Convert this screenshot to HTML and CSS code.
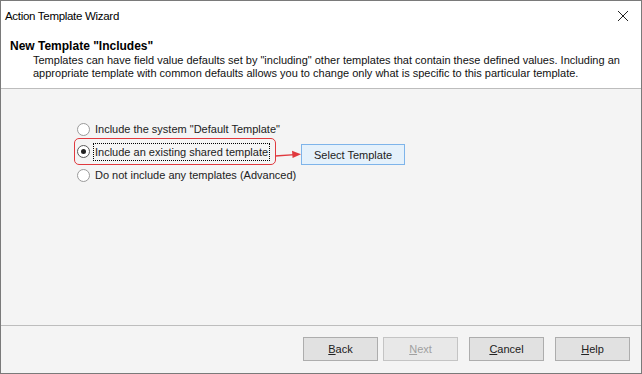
FILE: index.html
```html
<!DOCTYPE html>
<html>
<head>
    <title>Action Template Wizard</title>
    <link rel="stylesheet" href="styles.css">
</head>
<body>
    <div class="window">
        <div class="titlebar">
            <span class="title">Action Template Wizard</span>
            <svg class="close-icon" width="12" height="12" viewBox="0 0 12 12">
                <path d="M1 1 L11 11 M11 1 L1 11" stroke="#222" stroke-width="1" fill="none"/>
            </svg>
        </div>

        <div class="header">
            <h1 class="page-title">New Template "Includes"</h1>
            <p class="page-desc">
                Templates can have field value defaults set by "including" other templates that contain these defined values. Including an
                appropriate template with common defaults allows you to change only what is specific to this particular template.
            </p>
        </div>

        <div class="content">
            <div class="options">
                <label class="option">
                    <span class="radio"></span>
                    <span class="option-text">Include the system "Default Template"</span>
                </label>

                <div class="option-row">
                    <label class="option option-highlight">
                        <span class="radio checked"></span>
                        <span class="option-text focused">Include an existing shared template</span>
                    </label>
                    <svg class="arrow" width="28" height="10" viewBox="0 0 28 10">
                        <path d="M0 6 L20 4.6" stroke="#e0393e" stroke-width="1.3" fill="none"/>
                        <path d="M26 4.2 L17 0.8 L17.6 8 Z" fill="#e0393e"/>
                    </svg>
                    <button class="select-button">Select Template</button>
                </div>

                <label class="option">
                    <span class="radio"></span>
                    <span class="option-text">Do not include any templates (Advanced)</span>
                </label>
            </div>
        </div>

        <div class="footer">
            <button class="wizard-button"><u>B</u>ack</button>
            <button class="wizard-button" disabled><u>N</u>ext</button>
            <button class="wizard-button wide-gap"><u>C</u>ancel</button>
            <button class="wizard-button wide-gap"><u>H</u>elp</button>
        </div>
    </div>
</body>
</html>
```

FILE: styles.css
```css
body {
    margin: 0;
    font-family: "Liberation Sans", Arial, sans-serif;
    font-size: 11px;
    color: #000;
    background-color: #fff;
}

.window {
    width: 642px;
    height: 374px;
    box-sizing: border-box;
    border: 1px solid #7a7a7a;
    display: flex;
    flex-direction: column;
    background-color: #fff;
}

.titlebar {
    height: 29px;
    display: flex;
    align-items: center;
    justify-content: space-between;
    padding: 0 12px 1px 4px;
}

.title {
    font-size: 11.5px;
    letter-spacing: -0.3px;
}

.close-icon {
    display: block;
}

.header {
    height: 58px;
    box-sizing: border-box;
    padding: 8px 0 0 9px;
    border-bottom: 1px solid #bdbdbd;
}

.page-title {
    margin: 0;
    font-size: 12px;
    font-weight: bold;
    line-height: 15px;
}

.page-desc {
    margin: 0;
    padding-left: 23px;
    line-height: 13px;
    color: #111;
}

.content {
    flex: 1;
    background-color: #f4f4f4;
    border-bottom: 1px solid #bdbdbd;
    padding: 32px 0 0 73px;
}

.options {
    display: flex;
    flex-direction: column;
    align-items: flex-start;
}

.option {
    display: flex;
    align-items: center;
    height: 16px;
    padding-left: 3px;
    color: #222;
}

.option-row {
    display: flex;
    align-items: flex-start;
    margin: 1px 0 2px;
    position: relative;
}

.option-highlight {
    height: 27px;
    box-sizing: border-box;
    padding: 0 5px 0 2px;
    border: 1px solid #e0393e;
    border-radius: 5px;
}

.radio {
    width: 13px;
    height: 13px;
    box-sizing: border-box;
    border: 1px solid #9a9a9a;
    border-radius: 50%;
    background-color: #fff;
    margin-right: 3px;
    position: relative;
}

.radio.checked {
    border-color: #5a5a5a;
}

.radio.checked::after {
    content: "";
    position: absolute;
    left: 3px;
    top: 3px;
    width: 5px;
    height: 5px;
    border-radius: 50%;
    background-color: #222;
}

.option-text {
    padding: 1px;
    border: 1px dotted transparent;
    line-height: 14px;
}

.option-text.focused {
    border-color: #000;
}

.arrow {
    margin-top: 12px;
    margin-left: -1px;
    display: block;
}

.select-button {
    margin-top: 6px;
    margin-left: -2px;
    width: 104px;
    height: 21px;
    background-color: #e5f1fb;
    border: 1px solid #7eb4ea;
    font-family: inherit;
    font-size: 11px;
    color: #222;
    padding: 0;
}

.footer {
    height: 47px;
    box-sizing: border-box;
    background-color: #f4f4f4;
    display: flex;
    justify-content: flex-end;
    padding: 11px 11px 0 0;
}

.wizard-button {
    width: 75px;
    height: 24px;
    margin-left: 5px;
    background-color: #e1e1e1;
    border: 1px solid #adadad;
    font-family: inherit;
    font-size: 11px;
    color: #222;
    padding: 0;
}

.wizard-button.wide-gap {
    margin-left: 11px;
}

.wizard-button:disabled {
    color: #a0a0a0;
    border-color: #c4c4c4;
    background-color: #e8e8e8;
}
```
